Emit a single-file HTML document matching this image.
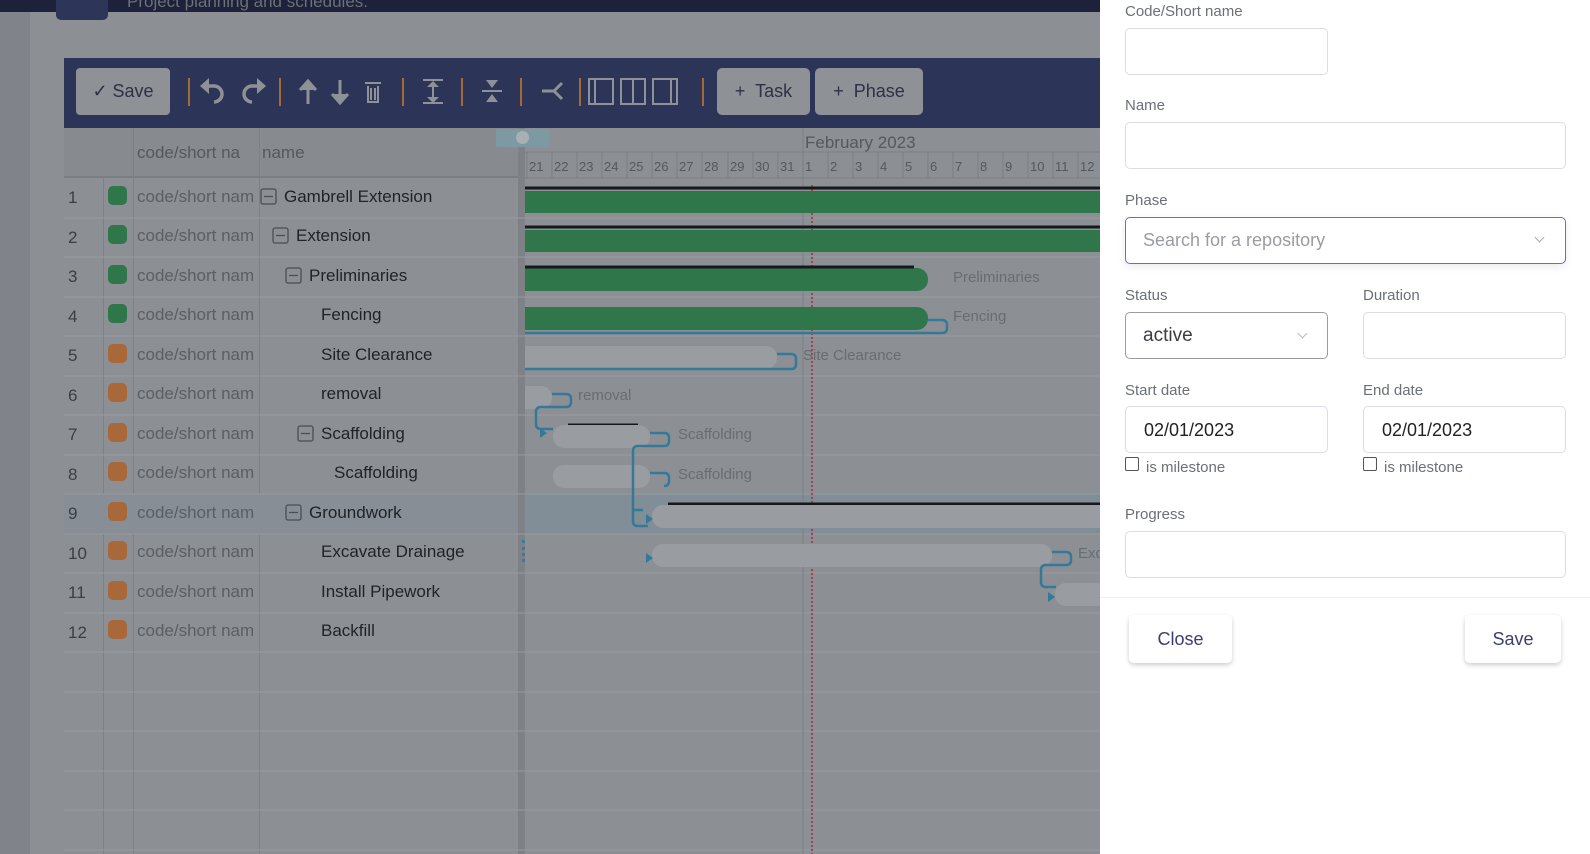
<!DOCTYPE html>
<html><head><meta charset="utf-8"><style>
*{box-sizing:border-box;margin:0;padding:0}
body{width:1590px;height:854px;overflow:hidden;position:relative;background:#8c9095;font-family:"Liberation Sans",sans-serif}
.a{position:absolute}
.lbl{position:absolute;left:1125px;font-size:15px;color:#6b6f78}
.inp{position:absolute;border:1px solid #dcdde2;border-radius:5px;background:#fff;height:47px}
.t{position:absolute;font-size:17px;white-space:nowrap}
.btn{position:absolute;background:#fff;border-radius:5px;box-shadow:0 2px 5px rgba(0,0,0,.2);font-size:18px;color:#3b3f6e;text-align:center;line-height:48px}
</style></head><body>
<div class="a" style="left:0;top:0;width:1100px;height:12px;background:#1d2139"></div>
<div class="a" style="left:0;top:12px;width:30px;height:842px;background:#80848a"></div>
<div class="a" style="left:56px;top:0;width:52px;height:20px;background:#2d3558;border-radius:0 0 5px 5px"></div>
<div class="t" style="left:127px;top:-8px;color:#6c7078;font-size:17px">Project planning and schedules.</div>
<!-- toolbar -->
<div class="a" style="left:64px;top:58px;width:1036px;height:70px;background:#2c3457"></div>
<div class="a" style="left:76px;top:68px;width:94px;height:47px;background:#8e9196;border-radius:4px;color:#2c3146;font-size:18px;line-height:47px;text-align:center">✓ Save</div>
<svg class="a" style="left:180px;top:68px" width="530" height="47" viewBox="0 0 530 47" fill="none" stroke="#8e9196" stroke-width="3">
<g stroke="#a36a35" stroke-width="2"><line x1="9" y1="10" x2="9" y2="38"/><line x1="100" y1="10" x2="100" y2="38"/><line x1="223" y1="10" x2="223" y2="38"/><line x1="282" y1="10" x2="282" y2="38"/><line x1="341" y1="10" x2="341" y2="38"/><line x1="400" y1="10" x2="400" y2="38"/><line x1="523" y1="10" x2="523" y2="38"/></g>
<path d="M28 18 h6 a8 8 0 0 1 0 16" stroke-width="3.5"/><path d="M20 18 l9 -8 v16z" fill="#8e9196" stroke="none"/>
<path d="M78 18 h-6 a8 8 0 0 0 0 16" stroke-width="3.5"/><path d="M86 18 l-9 -8 v16z" fill="#8e9196" stroke="none"/>
<path d="M128 36 V18 M120 22 l8 -9 l8 9" fill="#8e9196"/>
<path d="M160 12 V30 M152 26 l8 9 l8 -9" fill="#8e9196"/>
<path d="M185 15 h16 M188 18 v16 h10 v-16 M191 20v12M195 20v12" stroke-width="2"/>
<path d="M243 12h20M243 35h20M253 16v16" stroke-width="2"/><path d="M247 19h12l-6-6zM247 29h12l-6 6z" fill="#8e9196" stroke="none"/>
<path d="M302 23h20" stroke-width="2"/><path d="M306 12h12l-6 8zM306 34h12l-6-8z" fill="#8e9196" stroke="none"/>
<path d="M362 23h12 l8-8 M374 23 l8 8" stroke-width="3"/>
<g stroke-width="2"><rect x="409" y="11" width="24" height="25"/><line x1="415" y1="11" x2="415" y2="36"/><rect x="441" y="11" width="24" height="25"/><line x1="453" y1="11" x2="453" y2="36"/><rect x="473" y="11" width="24" height="25"/><line x1="491" y1="11" x2="491" y2="36"/></g>
</svg>
<div class="a" style="left:717px;top:68px;width:93px;height:47px;background:#8e9196;border-radius:5px;color:#2c3146;font-size:18px;line-height:47px;text-align:center">+&nbsp; Task</div>
<div class="a" style="left:815px;top:68px;width:108px;height:47px;background:#8e9196;border-radius:5px;color:#2c3146;font-size:18px;line-height:47px;text-align:center">+&nbsp; Phase</div>
<!-- grid header -->
<div class="a" style="left:64px;top:128px;width:454px;height:50px;background:#878b90;border-bottom:2px solid #7b7f84"></div>
<div class="a" style="left:133px;top:128px;width:1px;height:726px;background:#7d8186"></div>
<div class="a" style="left:259px;top:128px;width:1px;height:726px;background:#7d8186"></div>
<div class="a" style="left:103px;top:178px;width:1px;height:676px;background:#7d8186"></div>
<div class="t" style="left:137px;top:143px;color:#54585f;width:122px;overflow:hidden">code/short na</div>
<div class="t" style="left:262px;top:143px;color:#54585f">name</div>
<!-- row 9 highlight -->
<div class="a" style="left:64px;top:494px;width:454px;height:40px;background:#878e95"></div>
<div class="a" style="left:525px;top:494px;width:575px;height:40px;background:#818d97"></div>
<div class="a" style="left:518px;top:128px;width:7px;height:726px;background:#7e8287"></div>
<div class="a" style="left:496px;top:129px;width:53px;height:18px;background:#7d9aa3;border-radius:2px"></div>
<div class="a" style="left:516px;top:131px;width:13px;height:13px;background:#a9afb3;border-radius:50%"></div>
<div class="a" style="left:522px;top:540px;width:3px;height:22px;border-left:3px dotted #3e7a97"></div>
<svg class="a" style="left:0;top:0" width="1100" height="854">
<defs><clipPath id="c"><rect x="525" y="178" width="575" height="676"/></clipPath></defs>
<g stroke="#979b9f" stroke-width="1">
<line x1="64" y1="218" x2="1100" y2="218"/><line x1="64" y1="257" x2="1100" y2="257"/><line x1="64" y1="297" x2="1100" y2="297"/><line x1="64" y1="336" x2="1100" y2="336"/><line x1="64" y1="376" x2="1100" y2="376"/><line x1="64" y1="415" x2="1100" y2="415"/><line x1="64" y1="455" x2="1100" y2="455"/><line x1="64" y1="494" x2="1100" y2="494"/><line x1="64" y1="534" x2="1100" y2="534"/><line x1="64" y1="573" x2="1100" y2="573"/><line x1="64" y1="613" x2="1100" y2="613"/><line x1="64" y1="652" x2="1100" y2="652"/><line x1="64" y1="692" x2="1100" y2="692"/><line x1="64" y1="731" x2="1100" y2="731"/><line x1="64" y1="771" x2="1100" y2="771"/><line x1="64" y1="810" x2="1100" y2="810"/><line x1="64" y1="850" x2="1100" y2="850"/>
</g>
<line x1="525" y1="152" x2="1100" y2="152" stroke="#7b7f84"/>
<line x1="525" y1="178" x2="1100" y2="178" stroke="#7b7f84"/>
<g stroke="#7b7f84"><line x1="527" y1="152" x2="527" y2="178"/><line x1="552" y1="152" x2="552" y2="178"/><line x1="577" y1="152" x2="577" y2="178"/><line x1="602" y1="152" x2="602" y2="178"/><line x1="627" y1="152" x2="627" y2="178"/><line x1="652" y1="152" x2="652" y2="178"/><line x1="677" y1="152" x2="677" y2="178"/><line x1="702" y1="152" x2="702" y2="178"/><line x1="728" y1="152" x2="728" y2="178"/><line x1="753" y1="152" x2="753" y2="178"/><line x1="778" y1="152" x2="778" y2="178"/><line x1="803" y1="128" x2="803" y2="854"/><line x1="828" y1="152" x2="828" y2="178"/><line x1="853" y1="152" x2="853" y2="178"/><line x1="878" y1="152" x2="878" y2="178"/><line x1="903" y1="152" x2="903" y2="178"/><line x1="928" y1="152" x2="928" y2="178"/><line x1="953" y1="152" x2="953" y2="178"/><line x1="978" y1="152" x2="978" y2="178"/><line x1="1003" y1="152" x2="1003" y2="178"/><line x1="1028" y1="152" x2="1028" y2="178"/><line x1="1053" y1="152" x2="1053" y2="178"/><line x1="1078" y1="152" x2="1078" y2="178"/></g>
<g font-family="Liberation Sans" font-size="13" fill="#54585f">
<text x="529" y="171">21</text><text x="554" y="171">22</text><text x="579" y="171">23</text><text x="604" y="171">24</text><text x="629" y="171">25</text><text x="654" y="171">26</text><text x="679" y="171">27</text><text x="704" y="171">28</text><text x="730" y="171">29</text><text x="755" y="171">30</text><text x="780" y="171">31</text><text x="805" y="171">1</text><text x="830" y="171">2</text><text x="855" y="171">3</text><text x="880" y="171">4</text><text x="905" y="171">5</text><text x="930" y="171">6</text><text x="955" y="171">7</text><text x="980" y="171">8</text><text x="1005" y="171">9</text><text x="1030" y="171">10</text><text x="1055" y="171">11</text><text x="1080" y="171">12</text>
<text x="805" y="148" font-size="17">February 2023</text>
</g>
<line x1="812" y1="185" x2="812" y2="854" stroke="#a0434f" stroke-width="2" stroke-dasharray="2 2"/>
<g clip-path="url(#c)">
<g fill="#2f774a">
<rect x="525" y="191" width="575" height="22"/><rect x="525" y="230" width="575" height="22"/>
<rect x="505" y="268" width="423" height="23" rx="11"/><rect x="505" y="307" width="423" height="23" rx="11"/>
</g>
<g stroke="#16181c" stroke-width="3"><line x1="525" y1="188" x2="1100" y2="188"/><line x1="525" y1="227" x2="1100" y2="227"/><line x1="525" y1="267" x2="914" y2="267"/><line x1="568" y1="425" x2="638" y2="425"/><line x1="668" y1="504" x2="1100" y2="504"/></g>
<g fill="#999ca0">
<rect x="505" y="346" width="272" height="23" rx="11"/><rect x="505" y="386" width="47" height="23" rx="11"/><rect x="553" y="425" width="97" height="23" rx="11"/><rect x="553" y="465" width="97" height="23" rx="11"/><rect x="652" y="505" width="460" height="23" rx="11"/><rect x="652" y="544" width="400" height="23" rx="11"/><rect x="1055" y="583" width="60" height="23" rx="11"/>
</g>
<g stroke="#34799a" stroke-width="2.5" fill="none">
<path d="M928 320 h14 q5 0 5 5 v3 q0 5 -5 5 h-417"/>
<path d="M777 354 h14 q5 0 5 5 v5 q0 5 -5 5 h-266"/>
<path d="M552 394 h14 q5 0 5 5 v3 q0 5 -5 5 h-25 q-5 0 -5 5 v12 q0 5 5 5 h12"/>
<path d="M650 433 h14 q5 0 5 5 v3 q0 5 -5 5 h-26 q-5 0 -5 5 v70 q0 5 5 5 h10 M633 510 h10"/>
<path d="M650 473 h14 q5 0 5 5 v3 q0 5 -5 5"/>
<path d="M1052 552 h14 q5 0 5 5 v3 q0 5 -5 5 h-20 q-5 0 -5 5 v12 q0 5 5 5 h10"/>
</g>
<g fill="#34799a"><path d="M540 428 l7 5 l-7 5z"/><path d="M646 514 l7 5 l-7 5z"/><path d="M646 553 l7 5 l-7 5z"/><path d="M1048 592 l7 5 l-7 5z"/></g>
</g>
<g font-family="Liberation Sans" font-size="15" fill="#686c73">
<text x="953" y="282">Preliminaries</text><text x="953" y="321">Fencing</text><text x="803" y="360">Site Clearance</text><text x="578" y="400">removal</text><text x="678" y="439">Scaffolding</text><text x="678" y="479">Scaffolding</text><text x="1078" y="558">Exc</text>
</g>
<g fill="#2f774a"><rect x="108" y="186" width="19" height="19" rx="5"/><rect x="108" y="225" width="19" height="19" rx="5"/><rect x="108" y="265" width="19" height="19" rx="5"/><rect x="108" y="304" width="19" height="19" rx="5"/></g>
<g fill="#a8683a"><rect x="108" y="344" width="19" height="19" rx="5"/><rect x="108" y="383" width="19" height="19" rx="5"/><rect x="108" y="423" width="19" height="19" rx="5"/><rect x="108" y="462" width="19" height="19" rx="5"/><rect x="108" y="502" width="19" height="19" rx="5"/><rect x="108" y="541" width="19" height="19" rx="5"/><rect x="108" y="581" width="19" height="19" rx="5"/><rect x="108" y="620" width="19" height="19" rx="5"/></g>
<g fill="none" stroke="#4a4e55" stroke-width="1.3"><rect x="261" y="189" width="15" height="15" rx="2"/><path d="M264 196.5h9"/><rect x="273" y="228" width="15" height="15" rx="2"/><path d="M276 235.5h9"/><rect x="286" y="268" width="15" height="15" rx="2"/><path d="M289 275.5h9"/><rect x="298" y="426" width="15" height="15" rx="2"/><path d="M301 433.5h9"/><rect x="286" y="505" width="15" height="15" rx="2"/><path d="M289 512.5h9"/></g>
<g font-family="Liberation Sans" font-size="17" fill="#3a3e45">
<text x="68" y="203">1</text><text x="68" y="243">2</text><text x="68" y="282">3</text><text x="68" y="322">4</text><text x="68" y="361">5</text><text x="68" y="401">6</text><text x="68" y="440">7</text><text x="68" y="480">8</text><text x="68" y="519">9</text><text x="68" y="559">10</text><text x="68" y="598">11</text><text x="68" y="638">12</text>
</g>
<g font-family="Liberation Sans" font-size="17" fill="#5a5e65"><text x="137" y="202">code/short nam</text><text x="137" y="241">code/short nam</text><text x="137" y="281">code/short nam</text><text x="137" y="320">code/short nam</text><text x="137" y="360">code/short nam</text><text x="137" y="399">code/short nam</text><text x="137" y="439">code/short nam</text><text x="137" y="478">code/short nam</text><text x="137" y="518">code/short nam</text><text x="137" y="557">code/short nam</text><text x="137" y="597">code/short nam</text><text x="137" y="636">code/short nam</text></g>
<g font-family="Liberation Sans" font-size="17" fill="#1f2227">
<text x="284" y="202">Gambrell Extension</text><text x="296" y="241">Extension</text><text x="309" y="281">Preliminaries</text><text x="321" y="320">Fencing</text><text x="321" y="360">Site Clearance</text><text x="321" y="399">removal</text><text x="321" y="439">Scaffolding</text><text x="334" y="478">Scaffolding</text><text x="309" y="518">Groundwork</text><text x="321" y="557">Excavate Drainage</text><text x="321" y="597">Install Pipework</text><text x="321" y="636">Backfill</text>
</g>
</svg>
<!-- side panel -->
<div class="a" style="left:1100px;top:0;width:490px;height:854px;background:#fff"></div>
<div class="lbl" style="top:3px">Code/Short name</div>
<div class="inp" style="left:1125px;top:28px;width:203px"></div>
<div class="lbl" style="top:97px">Name</div>
<div class="inp" style="left:1125px;top:122px;width:441px"></div>
<div class="lbl" style="top:192px">Phase</div>
<div class="inp" style="left:1125px;top:217px;width:441px;border-color:#6f66d8;box-shadow:0 3px 8px rgba(0,0,0,.08)"></div>
<div class="a" style="left:1143px;top:230px;font-size:18px;color:#9a9ca3">Search for a repository</div>
<div class="a" style="left:1536px;top:234px;width:7px;height:7px;border-right:1px solid #aaa;border-bottom:1px solid #aaa;transform:rotate(45deg)"></div>
<div class="lbl" style="top:287px">Status</div>
<div class="inp" style="left:1125px;top:312px;width:203px;border-color:#9a9ca3"></div>
<div class="a" style="left:1143px;top:325px;font-size:19px;color:#3a3c44">active</div>
<div class="a" style="left:1299px;top:330px;width:7px;height:7px;border-right:1px solid #bbb;border-bottom:1px solid #bbb;transform:rotate(45deg)"></div>
<div class="lbl" style="left:1363px;top:287px">Duration</div>
<div class="inp" style="left:1363px;top:312px;width:203px"></div>
<div class="lbl" style="top:382px">Start date</div>
<div class="inp" style="left:1125px;top:406px;width:203px"></div>
<div class="a" style="left:1144px;top:420px;font-size:18px;color:#222">02/01/2023</div>
<div class="lbl" style="left:1363px;top:382px">End date</div>
<div class="inp" style="left:1363px;top:406px;width:203px"></div>
<div class="a" style="left:1382px;top:420px;font-size:18px;color:#222">02/01/2023</div>
<div class="a" style="left:1125px;top:457px;width:14px;height:14px;border:1px solid #555;border-radius:2px"></div>
<div class="a" style="left:1146px;top:459px;font-size:15px;color:#6b6f78">is milestone</div>
<div class="a" style="left:1363px;top:457px;width:14px;height:14px;border:1px solid #555;border-radius:2px"></div>
<div class="a" style="left:1384px;top:459px;font-size:15px;color:#6b6f78">is milestone</div>
<div class="lbl" style="top:506px">Progress</div>
<div class="inp" style="left:1125px;top:531px;width:441px"></div>
<div class="a" style="left:1100px;top:597px;width:490px;height:1px;background:#eef0f3"></div>
<div class="btn" style="left:1129px;top:615px;width:103px">Close</div>
<div class="btn" style="left:1465px;top:615px;width:96px">Save</div>
</body></html>
